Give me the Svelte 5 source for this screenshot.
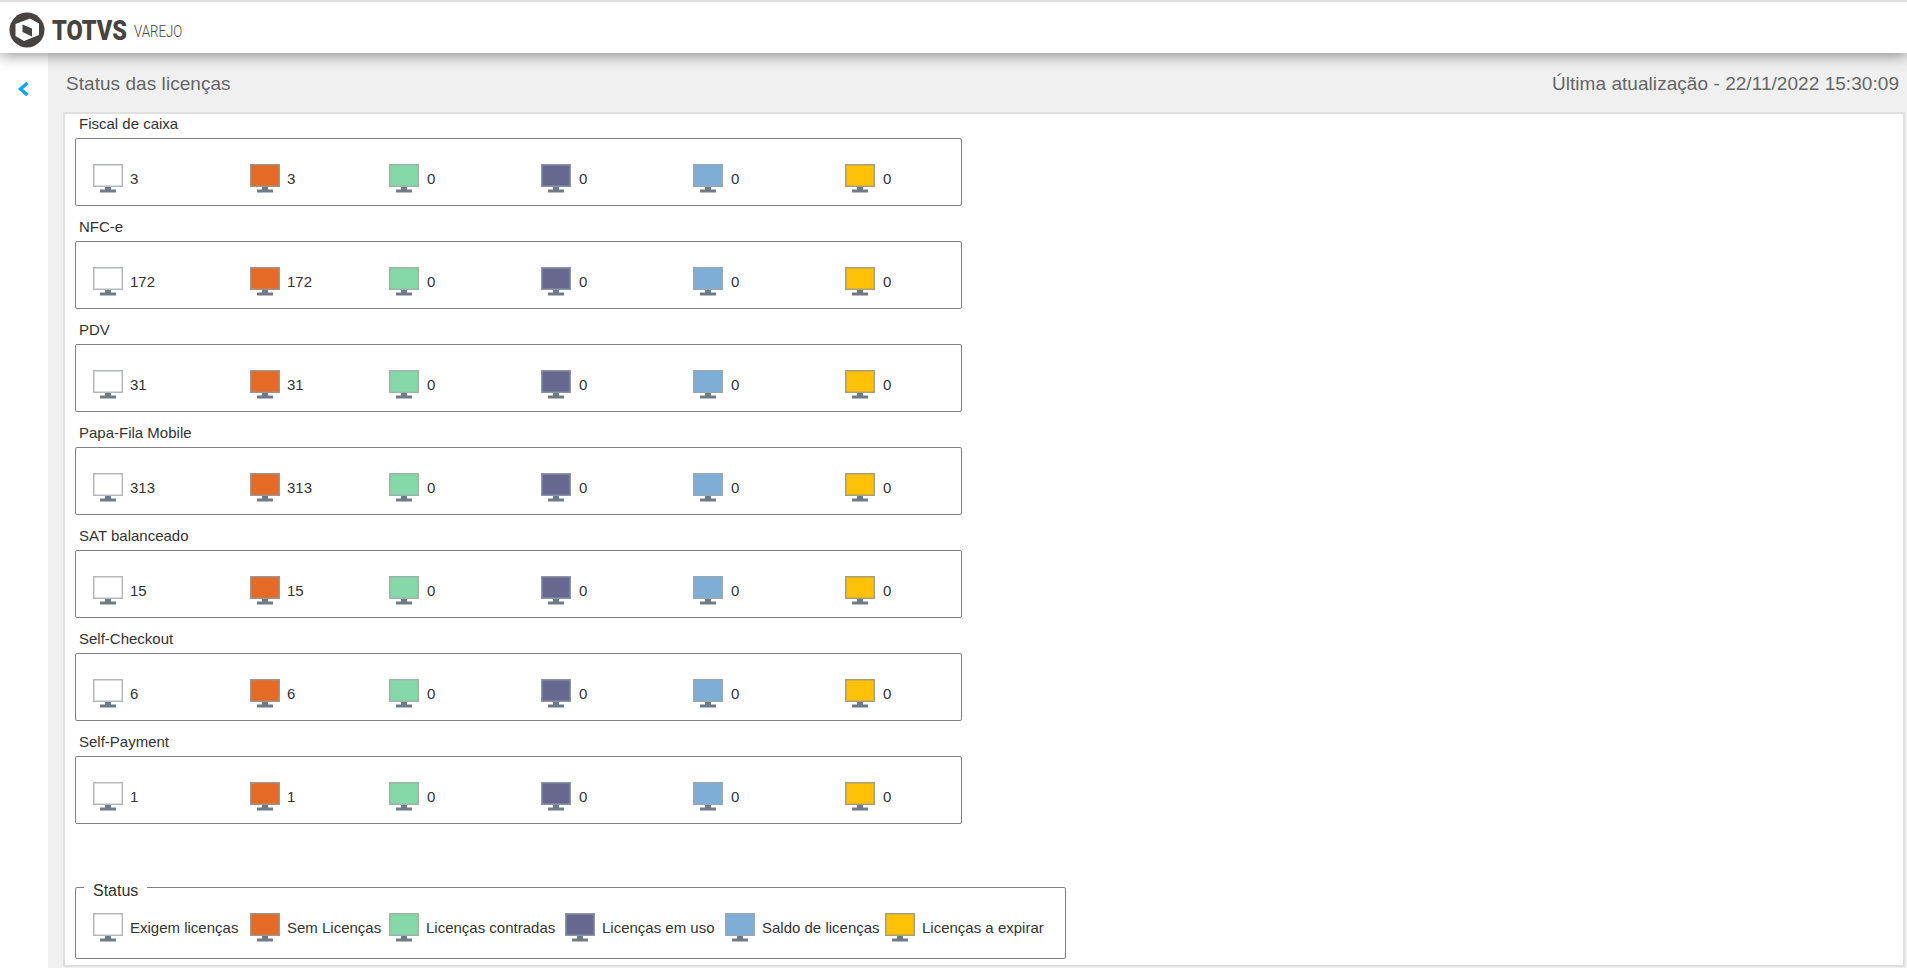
<script>
  const products = [
    { name: 'Fiscal de caixa', total: 3 },
    { name: 'NFC-e', total: 172 },
    { name: 'PDV', total: 31 },
    { name: 'Papa-Fila Mobile', total: 313 },
    { name: 'SAT balanceado', total: 15 },
    { name: 'Self-Checkout', total: 6 },
    { name: 'Self-Payment', total: 1 }
  ];

  const statuses = [
    { label: 'Exigem licenças', fill: '#ffffff', edge: '#b4b8ba' },
    { label: 'Sem Licenças', fill: '#e56a25', edge: '#a39288' },
    { label: 'Licenças contradas', fill: '#85d9a8', edge: '#9db5a8' },
    { label: 'Licenças em uso', fill: '#66688f', edge: '#8d93a8' },
    { label: 'Saldo de licenças', fill: '#7eaed6', edge: '#94a8b8' },
    { label: 'Licenças a expirar', fill: '#ffc107', edge: '#a8a078' }
  ];

  const counts = (p) => [p.total, p.total, 0, 0, 0, 0];
</script>

{#snippet monitor(s)}
  <svg class="monitor" width="30" height="29" viewBox="0 0 30 29">
    <rect x="0.75" y="0.75" width="28.5" height="21.5" fill={s.fill} stroke={s.edge} stroke-width="1.5" />
    <rect x="12" y="23" width="6" height="3" fill="#6f7a84" />
    <rect x="7" y="25.5" width="16" height="3" fill="#6f7a84" />
  </svg>
{/snippet}

<div class="page">
  <header class="topbar">
    <svg class="mark" width="36" height="36" viewBox="0 0 36 36">
      <circle cx="18" cy="18" r="17.5" fill="#474341" />
      <path d="M6.5 12 L21 6.5 L30 11.5 L30 23 L15 29 L6.5 24 Z" fill="#fff" />
      <path d="M13.5 12.5 L23 16.5 L23 24.5 L13.5 20 Z" fill="#474341" />
    </svg>
    <div class="brand"><span>TOTVS</span></div>
    <div class="module"><span>VAREJO</span></div>
  </header>

  <div class="body">
    <aside class="side">
      <svg width="12" height="14" viewBox="0 0 12 14">
        <path d="M10.5 1 L3.5 7 L10.5 13" fill="none" stroke="#14a6f5" stroke-width="3.4" />
      </svg>
    </aside>

    <main class="content">
      <div class="heading">
        <span>Status das licenças</span>
        <span>Última atualização - 22/11/2022 15:30:09</span>
      </div>

      <section class="panel">
        {#each products as p}
          <div class="group-name">{p.name}</div>
          <div class="group">
            {#each counts(p) as n, i}
              <div class="cell">
                {@render monitor(statuses[i])}
                <span>{n}</span>
              </div>
            {/each}
          </div>
        {/each}

        <fieldset class="legend">
          <legend>Status</legend>
          <div class="legend-row">
            {#each statuses as s}
              <div class="cell">
                {@render monitor(s)}
                <span>{s.label}</span>
              </div>
            {/each}
          </div>
        </fieldset>
      </section>
    </main>
  </div>
</div>

<style>
  :global(body) {
    margin: 0;
    font-family: "Liberation Sans", Arial, sans-serif;
    background: #fff;
  }
  .page {
    height: 968px;
    overflow: hidden;
    display: flex;
    flex-direction: column;
  }
  .topbar {
    position: relative;
    z-index: 2;
    height: 51px;
    flex-shrink: 0;
    background: #fff;
    border-top: 2px solid #dedede;
    box-shadow: 0 2px 14px rgba(0, 0, 0, .45);
    display: flex;
    align-items: flex-start;
    padding-left: 9px;
    color: #474341;
  }
  .mark { display: block; margin-top: 10px; flex-shrink: 0; }
  .brand {
    width: 75px;
    margin: 12px 0 0 7px;
    font-family: Roboto, sans-serif;
    font-weight: 900;
    font-size: 28px;
    line-height: 33px;
    white-space: nowrap;
  }
  .brand span { display: inline-block; transform: scaleX(.84); transform-origin: 0 50%; }
  .module {
    width: 49px;
    margin: 20px 0 0 7px;
    font-family: Roboto, sans-serif;
    font-weight: 300;
    font-size: 16px;
    line-height: 19px;
    white-space: nowrap;
  }
  .module span { display: inline-block; transform: scaleX(.83); transform-origin: 0 50%; }
  .body {
    flex: 1;
    display: flex;
    min-height: 0;
  }
  .side {
    width: 48px;
    flex-shrink: 0;
    background: #fff;
    padding: 29px 0 0 17px;
    box-sizing: border-box;
  }
  .content {
    flex: 1;
    background: #f0f0f0;
    padding-left: 15px;
    padding-right: 2px;
    min-width: 0;
  }
  .heading {
    display: flex;
    justify-content: space-between;
    height: 59px;
    padding: 20px 6px 0 3px;
    box-sizing: border-box;
    font-size: 19px;
    line-height: 21px;
    letter-spacing: .05px;
    color: #666;
  }
  .panel {
    height: 855px;
    box-sizing: border-box;
    background: #fff;
    border: 2px solid #e0e0e0;
    padding: 0 9px 0 10px;
    color: #333;
    font-size: 15px;
  }
  .group-name {
    height: 24px;
    line-height: 20px;
    padding-left: 4px;
  }
  .group {
    box-sizing: border-box;
    width: 887px;
    height: 68px;
    margin-bottom: 11px;
    border: 1px solid #808080;
    border-radius: 2px;
    padding: 25px 0 0 17px;
    display: grid;
    grid-template-columns: 157px 139px 152px 152px 152px 1fr;
  }
  .group .cell:nth-child(n + 3) { gap: 8px; }
  .cell {
    display: flex;
    align-items: flex-start;
    gap: 7px;
    white-space: nowrap;
  }
  .cell span { line-height: 18px; margin-top: 6px; }
  .monitor { display: block; flex-shrink: 0; }
  .legend {
    box-sizing: border-box;
    width: 991px;
    height: 85px;
    min-width: 0;
    margin: 50px 0 0 0;
    padding: 0 0 0 17px;
    border: 1px solid #808080;
    border-radius: 2px;
  }
  .legend legend {
    padding: 8px 9px 0;
    margin-left: -9px;
    font-size: 16px;
    line-height: 18px;
  }
  .legend-row {
    display: grid;
    grid-template-columns: 157px 139px 176px 160px 160px 1fr;
    margin-top: 13px;
  }
</style>
